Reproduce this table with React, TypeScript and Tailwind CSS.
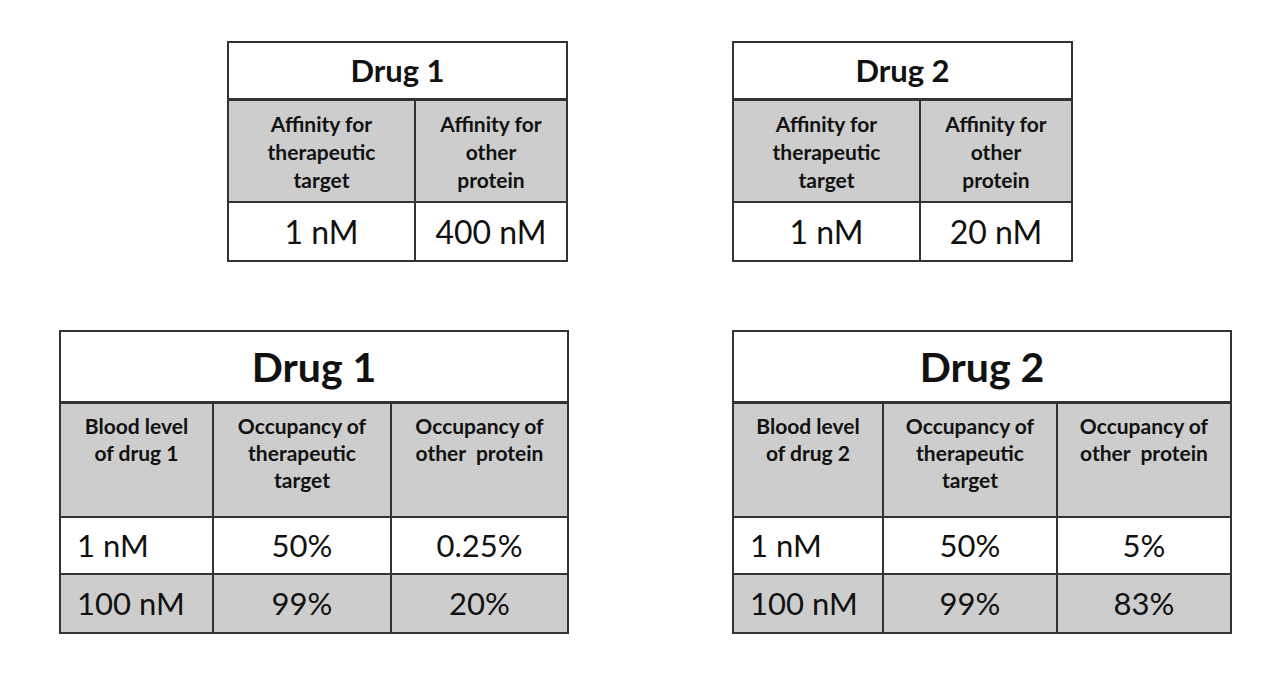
const line = 'border-[#333333]';

type AffinityProps = { drug: string; target: string; other: string };

const AffinityTable = ({ drug, target, other }: AffinityProps) => (
  <div className={`w-[341px] border-2 ${line} bg-white`}>
    <div className={`h-[58px] border-b-[3px] ${line} flex items-center justify-center text-[31px] font-bold`}>
      {drug}
    </div>
    <div className={`grid grid-cols-[187px_1fr] h-[102px] border-b-2 ${line} bg-[#cdcdcd] text-[21px] font-bold leading-[28px] text-center`}>
      <div className={`border-r-2 ${line} pt-[9px]`}>
        Affinity for
        <br />
        therapeutic
        <br />
        target
      </div>
      <div className="pt-[9px]">
        Affinity for
        <br />
        other
        <br />
        protein
      </div>
    </div>
    <div className="grid grid-cols-[187px_1fr] h-[57px] text-[32px]">
      <div className={`border-r-2 ${line} flex items-center justify-center`}>{target}</div>
      <div className="flex items-center justify-center">{other}</div>
    </div>
  </div>
);

type Row = { level: string; target: string; other: string };

type OccupancyProps = { drug: string; n: number; cols: string; width: string; rows: Row[] };

const OccupancyTable = ({ drug, n, cols, width, rows }: OccupancyProps) => (
  <div className={`${width} border-2 ${line} bg-white`}>
    <div className={`h-[72px] border-b-[3px] ${line} flex items-center justify-center text-[41px] font-bold`}>
      {drug}
    </div>
    <div className={`grid ${cols} h-[114px] border-b-2 ${line} bg-[#cdcdcd] text-[21px] font-bold leading-[27px] text-center`}>
      <div className={`border-r-2 ${line} pt-[8px]`}>
        Blood level
        <br />
        of drug {n}
      </div>
      <div className={`border-r-2 ${line} pt-[8px]`}>
        Occupancy of
        <br />
        therapeutic
        <br />
        target
      </div>
      <div className="pt-[8px]">
        Occupancy of
        <br />
        other{'\u00a0'} protein
      </div>
    </div>
    {rows.map((r, i) => (
      <div
        key={r.level}
        className={`grid ${cols} h-[57px] text-[31px] ${i === 0 ? `border-b-2 ${line} bg-white` : 'bg-[#cdcdcd]'}`}
      >
        <div className={`border-r-2 ${line} flex items-center pl-[16px]`}>{r.level}</div>
        <div className={`border-r-2 ${line} flex items-center justify-center`}>{r.target}</div>
        <div className="flex items-center justify-center">{r.other}</div>
      </div>
    ))}
  </div>
);

export default function App() {
  return (
    <div className="w-[1284px] h-[679px] bg-white text-[#111] font-['Lato','Noto_Sans',sans-serif] pt-[41px]">
      <div className="grid grid-cols-[732px_1fr] gap-y-[68px]">
        <div className="pl-[227px]">
          <AffinityTable drug="Drug 1" target="1 nM" other="400 nM" />
        </div>
        <div>
          <AffinityTable drug="Drug 2" target="1 nM" other="20 nM" />
        </div>
        <div className="pl-[59px]">
          <OccupancyTable
            drug="Drug 1"
            n={1}
            width="w-[510px]"
            cols="grid-cols-[153px_178px_1fr]"
            rows={[
              { level: '1 nM', target: '50%', other: '0.25%' },
              { level: '100 nM', target: '99%', other: '20%' },
            ]}
          />
        </div>
        <div>
          <OccupancyTable
            drug="Drug 2"
            n={2}
            width="w-[500px]"
            cols="grid-cols-[150px_174px_1fr]"
            rows={[
              { level: '1 nM', target: '50%', other: '5%' },
              { level: '100 nM', target: '99%', other: '83%' },
            ]}
          />
        </div>
      </div>
    </div>
  );
}
